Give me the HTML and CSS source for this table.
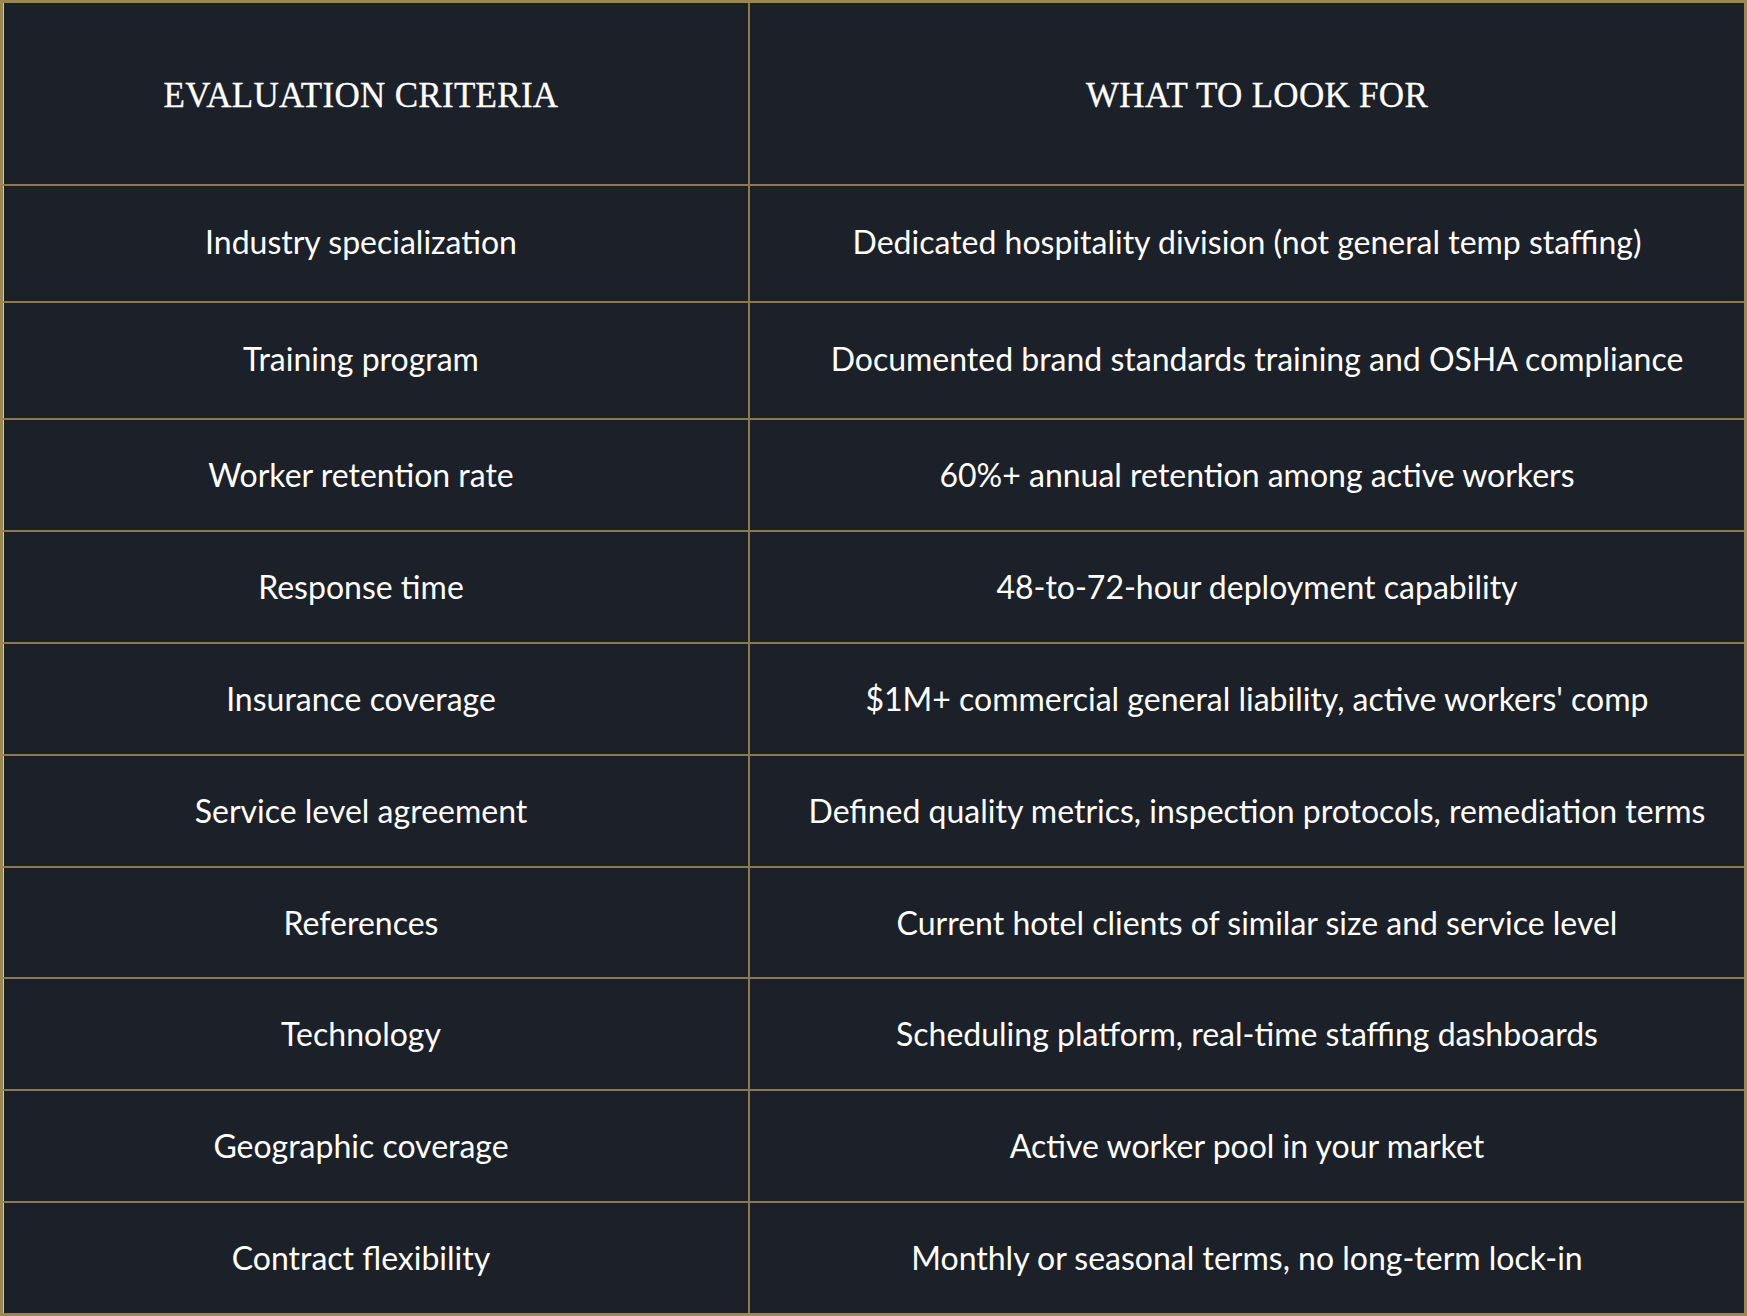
FILE: index.html
```html
<!DOCTYPE html>
<html lang="en">
<head>
<meta charset="utf-8">
<title>Evaluation Criteria</title>
<link rel="stylesheet" href="styles.css">
</head>
<body>
<div class="grid" role="table">
  <div class="cell left head" role="columnheader">EVALUATION CRITERIA</div>
  <div class="cell right head shift" role="columnheader">WHAT TO LOOK FOR</div>

  <div class="cell left tall" role="cell">Industry specialization</div>
  <div class="cell right tall" role="cell">Dedicated hospitality division (not general temp staffing)</div>

  <div class="cell left tall" role="cell">Training program</div>
  <div class="cell right tall shift" role="cell">Documented brand standards training and OSHA compliance</div>

  <div class="cell left" role="cell">Worker retention rate</div>
  <div class="cell right shift" role="cell">60%+ annual retention among active workers</div>

  <div class="cell left" role="cell">Response time</div>
  <div class="cell right shift" role="cell">48-to-72-hour deployment capability</div>

  <div class="cell left" role="cell">Insurance coverage</div>
  <div class="cell right shift" role="cell">$1M+ commercial general liability, active workers' comp</div>

  <div class="cell left" role="cell">Service level agreement</div>
  <div class="cell right shift" role="cell">Defined quality metrics, inspection protocols, remediation terms</div>

  <div class="cell left" role="cell">References</div>
  <div class="cell right shift" role="cell">Current hotel clients of similar size and service level</div>

  <div class="cell left" role="cell">Technology</div>
  <div class="cell right" role="cell">Scheduling platform, real-time staffing dashboards</div>

  <div class="cell left" role="cell">Geographic coverage</div>
  <div class="cell right" role="cell">Active worker pool in your market</div>

  <div class="cell left last" role="cell">Contract flexibility</div>
  <div class="cell right last" role="cell">Monthly or seasonal terms, no long-term lock-in</div>
</div>
</body>
</html>
```

FILE: styles.css
```css
html, body {
  margin: 0;
  padding: 0;
  background: #1c2129;
}

.grid {
  box-sizing: border-box;
  width: 1747px;
  height: 1316px;
  border: 3px solid #9a8752;
  background: #1c2129;
  display: grid;
  grid-template-columns: 747px 1fr;
  grid-template-rows: 183px 117px 117px 112px 112px 112px 112px 111px 112px 112px 110px;
  font-family: Lato, "Liberation Sans", sans-serif;
  color: #ffffff;
}

.cell {
  box-sizing: border-box;
  display: flex;
  align-items: center;
  justify-content: center;
  text-align: center;
  border-bottom: 2px solid #8a7a4e;
  font-size: 32px;
  padding-bottom: 1px;
  white-space: nowrap;
}

.cell.tall {
  padding-bottom: 5px;
}

.cell.last {
  border-bottom: none;
}

.left {
  border-right: 2px solid #8a7a4e;
  padding-right: 29px;
  box-shadow: inset 1px 0 0 #c6c9cc;
}

.right.shift {
  padding-left: 20px;
}

.head {
  font-family: "Liberation Serif", "DejaVu Serif", serif;
  font-size: 35px;
  letter-spacing: 0.3px;
  padding-top: 4px;
  padding-bottom: 0;
  -webkit-text-stroke: 0.3px #ffffff;
}
```
